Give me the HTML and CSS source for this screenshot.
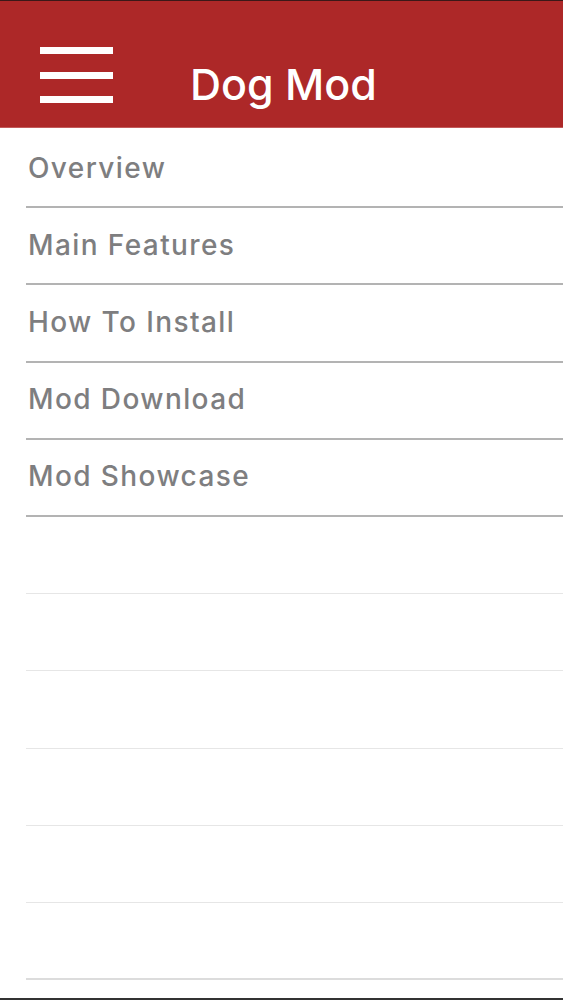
FILE: index.html
```html
<!DOCTYPE html>
<html lang="en">
<head>
    <meta charset="UTF-8">
    <meta name="viewport" content="width=device-width, initial-scale=1.0">
    <title>Dog Mod</title>
    <link rel="stylesheet" href="styles.css">
</head>
<body>
    <div class="tela">
        <div class="topo">
            <button class="menu" aria-label="menu">
                <span></span><span></span><span></span>
            </button>
            <h1 class="titulo">Dog Mod</h1>
        </div>
        <ul class="lista">
            <li class="item">Overview</li>
            <li class="item">Main Features</li>
            <li class="item">How To Install</li>
            <li class="item">Mod Download</li>
            <li class="item">Mod Showcase</li>
            <li class="item vazio"></li>
            <li class="item vazio"></li>
            <li class="item vazio"></li>
            <li class="item vazio"></li>
            <li class="item vazio"></li>
            <li class="item vazio"></li>
        </ul>
    </div>
</body>
</html>
```

FILE: styles.css
```css
*{
    margin: 0;
    padding: 0;
    box-sizing: border-box;
}
body{
    font-family: Inter, "Liberation Sans", sans-serif;
    background-color: #fff;
}
.tela{
    height: 100vh;
    overflow: hidden;
    border-top: 1px solid #3b1818;
    border-bottom: 2px solid #333;
    display: flex;
    flex-direction: column;
}
.topo{
    height: 127px;
    flex-shrink: 0;
    background-color: #ad2828;
    border-bottom: 1px solid #c25a5a;
    display: flex;
    align-items: flex-start;
}
.menu{
    width: 73px;
    height: 56px;
    margin-left: 40px;
    margin-top: 46px;
    background: none;
    border: none;
    display: flex;
    flex-direction: column;
    justify-content: space-between;
}
.menu span{
    display: block;
    height: 7px;
    background-color: #fff;
}
.titulo{
    margin-left: 77px;
    margin-top: 57px;
    color: #fff;
    font-size: 43px;
    font-weight: 500;
}
.lista{
    list-style: none;
    padding-top: 3px;
    margin-left: 26px;
}
.item{
    height: 77.2px;
    border-bottom: 2px solid #b3b3b3;
    display: flex;
    align-items: center;
    padding-left: 2px;
    padding-bottom: 2px;
    color: #7e7e80;
    font-size: 28px;
    font-weight: 500;
    letter-spacing: 1.4px;
}
.item.vazio{
    border-bottom: 1px solid #e6e6e6;
}
.item.vazio:last-child{
    border-bottom: 2px solid #dcdcdc;
}
```
